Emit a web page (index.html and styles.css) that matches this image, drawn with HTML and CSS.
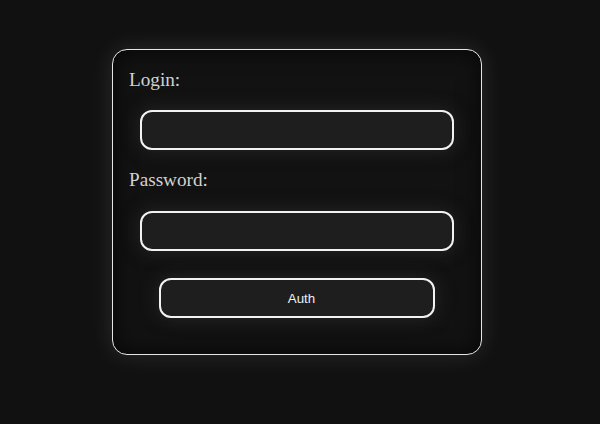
FILE: index.html
```html
<!DOCTYPE html>
<html>
<head>
<meta charset="utf-8">
<link rel="stylesheet" href="styles.css">
</head>
<body>
<div class="page">
  <form class="card">
    <label class="label">Login:</label>
    <input class="field" type="text">
    <label class="label second">Password:</label>
    <input class="field second-field" type="password">
    <button class="auth" type="button">Auth</button>
  </form>
</div>
</body>
</html>
```
FILE: styles.css
```css
html, body {
  margin: 0;
  padding: 0;
  background: #111111;
}
.page {
  width: 600px;
  height: 424px;
  box-sizing: border-box;
  padding: 49px 0 0 112px;
}
.card {
  box-sizing: border-box;
  width: 370px;
  height: 306px;
  border: 1px solid #e6e6e6;
  border-radius: 15px;
  background: #121212;
  box-shadow: 0 0 25px rgba(255, 255, 255, 0.11), inset 0 0 22px rgba(0, 0, 0, 0.7);
  padding-top: 19px;
  display: flex;
  flex-direction: column;
  align-items: flex-start;
  margin: 0;
}
.label {
  margin-left: 16px;
  font-family: "Liberation Serif", serif;
  font-size: 19.2px;
  line-height: 22px;
  color: #d2d2d2;
}
.label.second {
  margin-top: 19px;
}
.field {
  box-sizing: border-box;
  width: 314px;
  height: 40px;
  margin: 19px 0 0 27px;
  border: 2px solid #f2f2f2;
  border-radius: 12px;
  background: #1e1e1e;
  box-shadow: 0 0 18px rgba(60, 60, 60, 0.5);
  outline: none;
  color: #eee;
}
.second-field {
  margin-top: 20px;
}
.auth {
  box-sizing: border-box;
  width: 276px;
  height: 40px;
  margin: 27px 0 0 46px;
  border: 2px solid #f2f2f2;
  border-radius: 12px;
  background: #1e1e1e;
  box-shadow: 0 0 18px rgba(60, 60, 60, 0.5);
  font-family: "Liberation Sans", Arial, sans-serif;
  font-size: 13.33px;
  color: #f0f0f0;
  padding: 0 0 0 9px;
}
```
